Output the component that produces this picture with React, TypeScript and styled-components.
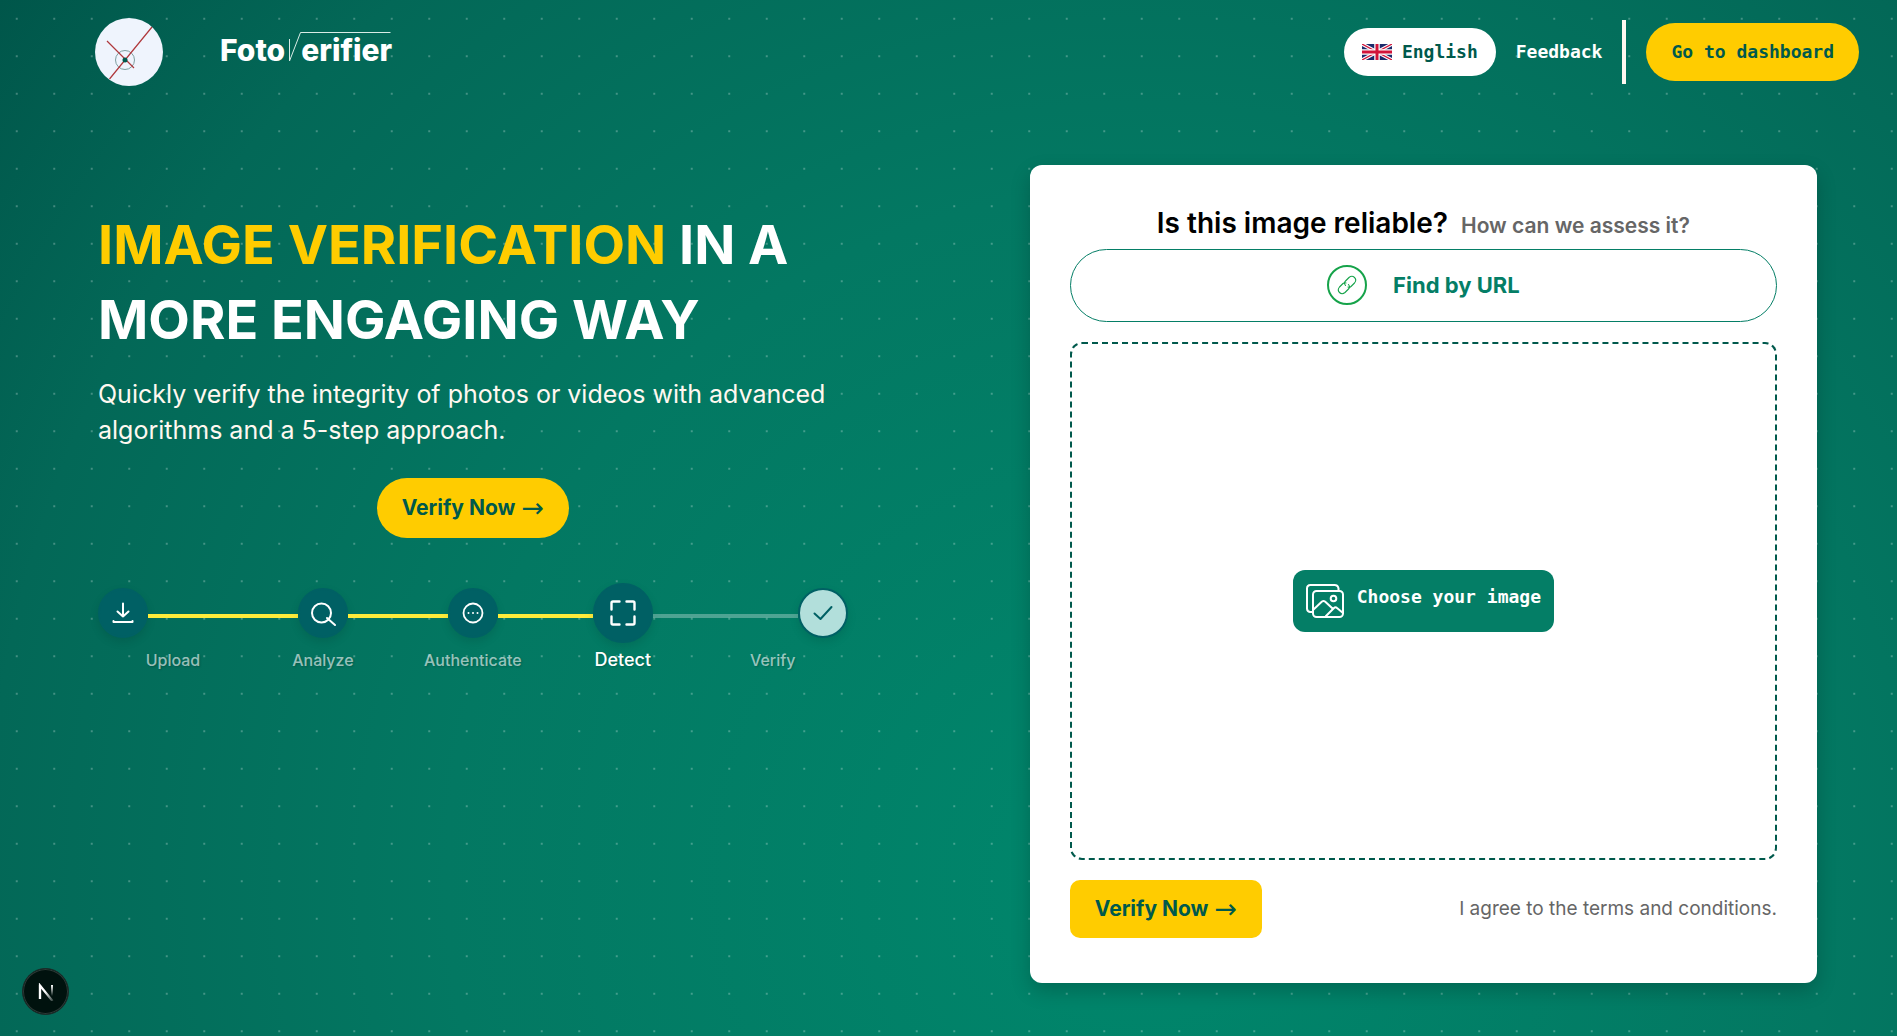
import React from "react";
import styled, { createGlobalStyle } from "styled-components";

const sans = `Inter, "Open Sans", "Liberation Sans", sans-serif`;
const mono = `"DejaVu Sans Mono", "Liberation Mono", monospace`;

const colors = {
  dark: "#00594c",
  green: "#047e66",
  yellow: "#ffcc00",
  step: "#006064",
  line: "#ffeb3b",
  mint: "#b2dfdb",
  muted: "#666666",
};

const GlobalStyle = createGlobalStyle`
  *, *::before, *::after { box-sizing: border-box; }
  body {
    margin: 0;
    font-family: ${sans};
    background: ${colors.green};
  }
  h1, h2, p, ol { margin: 0; padding: 0; }
  button { font: inherit; border: 0; cursor: pointer; }
`;

const Page = styled.div`
  min-height: 100vh;
  display: flex;
  flex-direction: column;
  background-color: ${colors.green};
  background-image:
    radial-gradient(circle at center, rgba(255, 255, 255, 0.26) 1px, transparent 1px),
    radial-gradient(circle at 60% 85%, #00876c 0%, #037862 48%, #036857 80%, #00564a 100%);
  background-size: 37.5px 37.5px, 100% 100%;
  background-position: -2px 0, 0 0;
`;

const Header = styled.header`
  display: flex;
  align-items: center;
  justify-content: space-between;
  flex-wrap: wrap;
  gap: 20px;
  min-height: 104px;
  padding: 18px 38px 18px 95px;
`;

const Brand = styled.a`
  display: flex;
  align-items: center;
  gap: 57px;
  color: #fff;
  text-decoration: none;
`;

const Wordmark = styled.span`
  display: flex;
  align-items: flex-end;
  padding-bottom: 4px;
  font-size: 30px;
  line-height: 36px;
  font-weight: 800;
`;

const LongV = styled.svg`
  width: 16px;
  height: 36px;
  overflow: visible;
`;

const Nav = styled.nav`
  display: flex;
  align-items: center;
  flex-wrap: wrap;
  gap: 20px;
  font-family: ${mono};
  font-size: 18px;
  line-height: 28px;
  font-weight: 700;
`;

const LanguageButton = styled.button`
  display: flex;
  align-items: center;
  gap: 10px;
  padding: 10px 18px;
  border-radius: 24px;
  background: #fff;
  color: ${colors.dark};
`;

const NavLink = styled.a`
  color: #fff;
  text-decoration: none;
`;

const Divider = styled.span`
  width: 4px;
  height: 64px;
  background: #fff8f0;
`;

const DashboardButton = styled.button`
  padding: 15px 25px;
  border-radius: 29px;
  background: ${colors.yellow};
  color: ${colors.dark};
`;

const Main = styled.main`
  display: grid;
  grid-template-columns: minmax(0, 20fr) minmax(0, 21fr);
  column-gap: 182px;
  align-items: start;
  padding: 61px 80px 52px 98px;

  @media (max-width: 1300px) {
    grid-template-columns: minmax(0, 1fr);
    row-gap: 60px;
    padding: 40px;
  }
`;

const Hero = styled.section`
  display: flex;
  flex-direction: column;
  padding-top: 42px;
`;

const Title = styled.h1`
  font-size: 54px;
  line-height: 75px;
  font-weight: 700;
  color: #fff;
`;

const Highlight = styled.span`
  color: ${colors.yellow};
`;

const Lead = styled.p`
  margin-top: 19px;
  font-size: 25px;
  line-height: 36px;
  color: #fff8f0;
`;

const VerifyButton = styled.button<{ $pill?: boolean }>`
  display: flex;
  align-items: center;
  gap: 6px;
  padding: ${(p) => (p.$pill ? "15px 25px" : "14px 25px")};
  border-radius: ${(p) => (p.$pill ? 30 : 10)}px;
  background: ${colors.yellow};
  color: ${colors.dark};
  font-size: 21px;
  line-height: 30px;
  font-weight: 700;
`;

const Arrow = styled.span`
  font-family: "DejaVu Sans", sans-serif;
  font-size: 27px;
  font-weight: 400;
`;

const HeroAction = styled.div`
  display: flex;
  justify-content: center;
  margin: 30px 0 45px;
`;

const Steps = styled.ol`
  display: grid;
  grid-template-columns: repeat(5, minmax(0, 1fr));
  list-style: none;
`;

const Step = styled.li`
  display: flex;
  flex-direction: column;
`;

const Track = styled.div`
  display: flex;
  align-items: center;
  height: 60px;
`;

const Segment = styled.span<{ $done: boolean }>`
  flex: 1;
  height: 4px;
  margin-top: 6px;
  background: ${(p) => (p.$done ? colors.line : "rgba(255, 255, 255, 0.3)")};
`;

const StepCircle = styled.span<{ $state: "done" | "current" | "next" }>`
  display: flex;
  align-items: center;
  justify-content: center;
  flex: none;
  width: ${(p) => (p.$state === "current" ? 60 : 50)}px;
  height: ${(p) => (p.$state === "current" ? 60 : 50)}px;
  border-radius: 50%;
  border: 2px solid ${colors.step};
  background: ${(p) => (p.$state === "next" ? colors.mint : colors.step)};
  color: ${(p) => (p.$state === "next" ? colors.step : "#fff")};
  box-shadow: 0 4px 10px rgba(0, 0, 0, 0.1);
`;

const StepLabel = styled.span<{ $current: boolean }>`
  margin-top: 4px;
  text-align: center;
  font-size: ${(p) => (p.$current ? 18 : 16)}px;
  line-height: 26px;
  font-weight: 500;
  color: ${(p) => (p.$current ? "#fff" : "rgba(255, 255, 255, 0.6)")};
  text-shadow: 1px 1px 2px rgba(0, 0, 0, 0.2);
`;

const Card = styled.section`
  display: flex;
  flex-direction: column;
  padding: 40px 40px 45px;
  border-radius: 12px;
  background: #fff;
  box-shadow: 0 8px 20px rgba(0, 0, 0, 0.2);
`;

const CardHeading = styled.div`
  display: flex;
  flex-wrap: wrap;
  align-items: baseline;
  justify-content: center;
  column-gap: 13px;
  padding-bottom: 8px;
`;

const Question = styled.h2`
  font-size: 28px;
  line-height: 36px;
  font-weight: 600;
  color: #000;
`;

const Hint = styled.p`
  font-size: 21px;
  line-height: 30px;
  font-weight: 600;
  color: ${colors.muted};
`;

const UrlButton = styled.button`
  display: flex;
  align-items: center;
  justify-content: center;
  gap: 26px;
  padding: 15px 16px 16px;
  border: 1px solid ${colors.green};
  border-radius: 37px;
  background: #fff;
  color: ${colors.green};
  font-size: 22px;
  line-height: 30px;
  font-weight: 700;
`;

const LinkBadge = styled.span`
  display: flex;
  align-items: center;
  justify-content: center;
  width: 40px;
  height: 40px;
  border: 2px solid #16a34a;
  border-radius: 50%;
  color: #16a34a;
`;

const DropZone = styled.div`
  display: flex;
  align-items: center;
  justify-content: center;
  min-height: 50vh;
  margin: 20px 0;
  border: 2px dashed ${colors.dark};
  border-radius: 12px;
`;

const ChooseButton = styled.button`
  display: flex;
  align-items: center;
  gap: 13px;
  padding: 12px 13px;
  border-radius: 12px;
  background: ${colors.green};
  color: #fff;
  font-family: ${mono};
  font-size: 18px;
  line-height: 30px;
  font-weight: 700;
`;

const ChooseText = styled.span`
  padding-bottom: 8px;
`;

const CardFooter = styled.div`
  display: flex;
  flex-wrap: wrap;
  align-items: center;
  justify-content: space-between;
  gap: 20px;
`;

const Terms = styled.p`
  font-size: 19px;
  line-height: 28px;
  color: ${colors.muted};
`;

const DevBadge = styled.button`
  position: fixed;
  left: 22px;
  bottom: 21px;
  width: 47px;
  height: 47px;
  padding: 0;
  border-radius: 50%;
  background: #00120e;
  border: 1px solid #1c2b28;
  box-shadow: inset 0 0 0 1px #2c3a37;
  display: flex;
  align-items: center;
  justify-content: center;
`;

const LogoMark = () => (
  <svg width="68" height="68" viewBox="0 0 68 68" aria-hidden="true">
    <circle cx="34" cy="34" r="34" fill="#eff4fd" />
    <circle cx="30" cy="42" r="9.5" fill="none" stroke="#7d9ea0" strokeWidth="1" />
    <path d="M14.500 61 57 9M12 23l27 27" stroke="#b0383c" strokeWidth="1.200" fill="none" />
    <circle cx="30" cy="42" r="2.500" fill="#00594c" />
  </svg>
);

const Flag = () => (
  <svg width="30" height="16" viewBox="0 0 60 32" preserveAspectRatio="none" aria-hidden="true">
    <path fill="#1b2a6b" d="M0 0h60v32H0z" />
    <path d="M0 0l60 32M60 0L0 32" stroke="#fff" strokeWidth="7" />
    <path d="M0 0l60 32M60 0L0 32" stroke="#d2143a" strokeWidth="2.500" />
    <path d="M30 0v32M0 16h60" stroke="#fff" strokeWidth="11" />
    <path d="M30 0v32M0 16h60" stroke="#d2143a" strokeWidth="6" />
  </svg>
);

const stroke = {
  fill: "none",
  stroke: "currentColor",
  strokeLinecap: "round" as const,
  strokeLinejoin: "round" as const,
};

const DownloadIcon = () => (
  <svg width="24" height="24" viewBox="0 0 24 24" {...stroke} strokeWidth="2" aria-hidden="true">
    <path d="M12 2.500v13M6.500 10.500l5.500 5 5.500-5M2.500 20v1h19v-1" />
  </svg>
);

const SearchIcon = () => (
  <svg width="28" height="28" viewBox="0 0 28 28" {...stroke} strokeWidth="2" aria-hidden="true">
    <circle cx="12.500" cy="14" r="9.500" />
    <path d="M18 19l8 7" />
  </svg>
);

const DotsIcon = () => (
  <svg width="24" height="24" viewBox="0 0 24 24" {...stroke} strokeWidth="1.800" aria-hidden="true">
    <circle cx="12" cy="12" r="9.500" />
    <path d="M7.500 12h.01M12 12h.01M16.500 12h.01" strokeWidth="2" />
  </svg>
);

const ScanIcon = () => (
  <svg width="28" height="28" viewBox="0 0 28 28" {...stroke} strokeWidth="2.400" aria-hidden="true">
    <path d="M2.500 10.500V4Q2.500 2.500 4 2.500H10.500M17.500 2.500h6.500Q25.500 2.500 25.500 4V10.500M25.500 17.500v6.500Q25.500 25.500 24 25.500H17.500M10.500 25.500H4Q2.500 25.500 2.500 24V17.500" />
  </svg>
);

const CheckIcon = () => (
  <svg width="22" height="22" viewBox="0 0 22 22" {...stroke} strokeWidth="2" aria-hidden="true">
    <path d="M2.500 11.500l6 5.500L19.500 5" />
  </svg>
);

const LinkIcon = () => (
  <svg width="20" height="20" viewBox="0 0 20 20" {...stroke} strokeWidth="1.100" aria-hidden="true">
    <path d="M8.500 10.500Q6.500 8 8.500 6l3.500-3.500q3-2.500 5.500 0t0 5.500L14 11.500q-1.500 1.200-3 .500" />
    <path d="M11.500 9.500q2 2.500 0 4.500L8 17.500q-3 2.500-5.500 0t0-5.500L6 8.500q1.500-1.200 3-.500" />
  </svg>
);

const ImagesIcon = () => (
  <svg width="38" height="34" viewBox="0 0 38 34" {...stroke} strokeWidth="2" aria-hidden="true">
    <path d="M7 28H4q-3-.500-3-3.500V4.500Q1 1 4.500 1h24q3.500 0 4 3.500V7" />
    <rect x="7" y="7" width="30" height="26" rx="3.500" />
    <circle cx="27.500" cy="14.500" r="2.800" />
    <path d="M7 26l9-8.500q1.500-1 3 0L26 24M20 32l8-8q1.500-1.500 3 0l6 5" />
  </svg>
);

const NextIcon = () => (
  <svg width="18" height="18" viewBox="0 0 18 18" aria-hidden="true">
    <defs>
      <linearGradient id="stem" x1="0" y1="0" x2="0" y2="1">
        <stop offset="0" stopColor="#fff" />
        <stop offset="1" stopColor="#fff" stopOpacity="0" />
      </linearGradient>
      <linearGradient id="slash" gradientUnits="userSpaceOnUse" x1="8" y1="9" x2="16" y2="18">
        <stop offset="0" stopColor="#fff" />
        <stop offset="1" stopColor="#fff" stopOpacity="0.200" />
      </linearGradient>
    </defs>
    <path d="M3 16V2.500L15.500 18" fill="none" stroke="url(#slash)" strokeWidth="2.200" />
    <path d="M3 16V2" stroke="#fff" strokeWidth="2.200" />
    <rect x="14" y="2" width="2" height="11" fill="url(#stem)" />
  </svg>
);

const steps = [
  { label: "Upload", state: "done", Icon: DownloadIcon },
  { label: "Analyze", state: "done", Icon: SearchIcon },
  { label: "Authenticate", state: "done", Icon: DotsIcon },
  { label: "Detect", state: "current", Icon: ScanIcon },
  { label: "Verify", state: "next", Icon: CheckIcon },
] as const;

export default function App() {
  return (
    <>
      <GlobalStyle />
      <Page>
        <Header>
          <Brand href="#" aria-label="FotoVerifier">
            <LogoMark />
            <Wordmark>
              Foto
              <LongV viewBox="0 0 16 36" aria-hidden="true">
                <path d="M4.500 7v22L15.500 .5h90" fill="none" stroke="#d9ece6" strokeWidth="1" />
              </LongV>
              erifier
            </Wordmark>
          </Brand>
          <Nav>
            <LanguageButton type="button">
              <Flag />
              English
            </LanguageButton>
            <NavLink href="#feedback">Feedback</NavLink>
            <Divider />
            <DashboardButton type="button">Go to dashboard</DashboardButton>
          </Nav>
        </Header>
        <Main>
          <Hero>
            <Title>
              <Highlight>IMAGE VERIFICATION</Highlight> IN A<br />
              MORE ENGAGING WAY
            </Title>
            <Lead>
              Quickly verify the integrity of photos or videos with advanced algorithms and a 5-step
              approach.
            </Lead>
            <HeroAction>
              <VerifyButton type="button" $pill>
                Verify Now <Arrow>→</Arrow>
              </VerifyButton>
            </HeroAction>
            <Steps>
              {steps.map(({ label, state, Icon }, i) => (
                <Step key={label}>
                  <Track>
                    {i > 0 && <Segment $done={state !== "next"} />}
                    <StepCircle $state={state}>
                      <Icon />
                    </StepCircle>
                    {i < steps.length - 1 && <Segment $done={state === "done"} />}
                  </Track>
                  <StepLabel $current={state === "current"}>{label}</StepLabel>
                </Step>
              ))}
            </Steps>
          </Hero>
          <Card>
            <CardHeading>
              <Question>Is this image reliable?</Question>
              <Hint>How can we assess it?</Hint>
            </CardHeading>
            <UrlButton type="button">
              <LinkBadge>
                <LinkIcon />
              </LinkBadge>
              Find by URL
            </UrlButton>
            <DropZone>
              <ChooseButton type="button">
                <ImagesIcon />
                <ChooseText>Choose your image</ChooseText>
              </ChooseButton>
            </DropZone>
            <CardFooter>
              <VerifyButton type="button">
                Verify Now <Arrow>→</Arrow>
              </VerifyButton>
              <Terms>I agree to the terms and conditions.</Terms>
            </CardFooter>
          </Card>
        </Main>
        <DevBadge type="button" aria-label="Open developer tools">
          <NextIcon />
        </DevBadge>
      </Page>
    </>
  );
}
